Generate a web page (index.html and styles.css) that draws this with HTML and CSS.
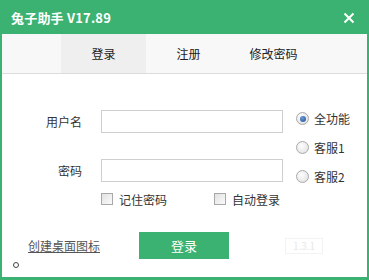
FILE: index.html
```html
<!DOCTYPE html>
<html lang="zh">
<head>
<meta charset="utf-8">
<link rel="stylesheet" href="styles.css">
</head>
<body>
<div class="window">
  <div class="titlebar">
    <span class="title">兔子助手 V17.89</span>
    <svg class="close" width="12" height="12" viewBox="0 0 12 12"><path d="M1.5 1.5 L10.5 10.5 M10.5 1.5 L1.5 10.5" stroke="#fff" stroke-width="2" fill="none"/></svg>
  </div>
  <div class="content">
    <div class="tabs">
      <div class="tab active">登录</div>
      <div class="tab">注册</div>
      <div class="tab">修改密码</div>
    </div>
    <div class="main">
      <div class="fields">
        <div class="row">
          <label class="label">用户名</label>
          <div class="input"></div>
        </div>
        <div class="row row2">
          <label class="label">密码</label>
          <div class="input"></div>
        </div>
        <div class="checks">
          <div class="check"><span class="box"></span>记住密码</div>
          <div class="check check2"><span class="box"></span>自动登录</div>
        </div>
      </div>
      <div class="radios">
        <div class="radio"><span class="dot on"></span>全功能</div>
        <div class="radio"><span class="dot"></span>客服1</div>
        <div class="radio"><span class="dot"></span>客服2</div>
      </div>
    </div>
    <div class="actions">
      <span class="link">创建桌面图标</span>
      <div class="btn">登录</div>
      <div class="ghost">1.3.1</div>
    </div>
    <div class="foot"><span class="ring"></span></div>
  </div>
</div>
</body>
</html>
```

FILE: styles.css
```css
* { box-sizing: border-box; }
html, body { margin: 0; padding: 0; }
body {
  width: 369px;
  height: 280px;
  font-family: "Noto Sans CJK SC", "Noto Sans", sans-serif;
  font-size: 12px;
  color: #333;
  background: #fff;
}
.window {
  width: 369px;
  height: 280px;
  background: #3cb272;
  padding: 0 2px 3px 2px;
  display: flex;
  flex-direction: column;
}
.titlebar {
  height: 34px;
  display: flex;
  align-items: center;
  justify-content: space-between;
  padding: 0 12px 0 9px;
  flex: none;
}
.title {
  color: #fff;
  font-weight: bold;
  font-size: 13px;
  letter-spacing: 0.2px;
}
.close { margin-top: 2px; }
.content {
  flex: 1;
  background: #fff;
  display: flex;
  flex-direction: column;
}
.tabs {
  height: 40px;
  background: #f8f8f8;
  border-bottom: 1px solid #dcdcdc;
  display: flex;
  padding-left: 59px;
  flex: none;
}
.tab {
  width: 85px;
  display: flex;
  align-items: center;
  justify-content: center;
  font-size: 12px;
  color: #222;
}
.tab.active { background: #efefef; }
.main {
  display: flex;
  padding-top: 36px;
}
.fields { display: flex; flex-direction: column; }
.row { display: flex; align-items: center; height: 23px; }
.row2 { margin-top: 26px; }
.label {
  width: 80px;
  text-align: right;
  color: #333;
}
.input {
  margin-left: 19px;
  width: 182px;
  height: 23px;
  border: 1px solid #cfcfcf;
  background: #fff;
}
.checks {
  display: flex;
  margin-top: 10px;
  margin-left: 99px;
  height: 14px;
  align-items: center;
}
.check { display: flex; align-items: center; color: #333; }
.check2 { margin-left: 47px; }
.box {
  width: 12px;
  height: 12px;
  border: 1px solid #a8a8a8;
  background: linear-gradient(135deg, #e2e2e2, #fafafa);
  margin-right: 6px;
}
.radios {
  margin-left: 13px;
  display: flex;
  flex-direction: column;
  gap: 12px;
}
.radio {
  height: 17px;
  display: flex;
  align-items: center;
  color: #333;
}
.dot {
  width: 13px;
  height: 13px;
  border-radius: 50%;
  border: 1px solid #a9a9a9;
  background: radial-gradient(circle at 40% 35%, #fdfdfd, #dedede);
  margin-right: 5px;
  display: flex;
  align-items: center;
  justify-content: center;
}
.dot.on::after {
  content: "";
  width: 6px;
  height: 6px;
  border-radius: 50%;
  background: radial-gradient(circle at 40% 35%, #6a9ad8, #1d4f93);
}
.actions {
  display: flex;
  align-items: center;
  margin-top: 26px;
  height: 27px;
  padding-left: 26px;
}
.link {
  color: #555;
  text-decoration: underline;
  width: 111px;
}
.btn {
  width: 90px;
  height: 27px;
  background: #3cb272;
  color: #fff;
  display: flex;
  align-items: center;
  justify-content: center;
  font-size: 13px;
}
.ghost {
  margin-left: 56px;
  width: 38px;
  height: 16px;
  border: 1px solid #f3f3f3;
  color: #e8e8e8;
  font-size: 10px;
  display: flex;
  align-items: center;
  justify-content: center;
}
.foot {
  padding-left: 11px;
  margin-top: 3px;
  height: 8px;
}
.ring {
  display: block;
  width: 6px;
  height: 6px;
  border-radius: 50%;
  border: 1px solid #444;
}
```
